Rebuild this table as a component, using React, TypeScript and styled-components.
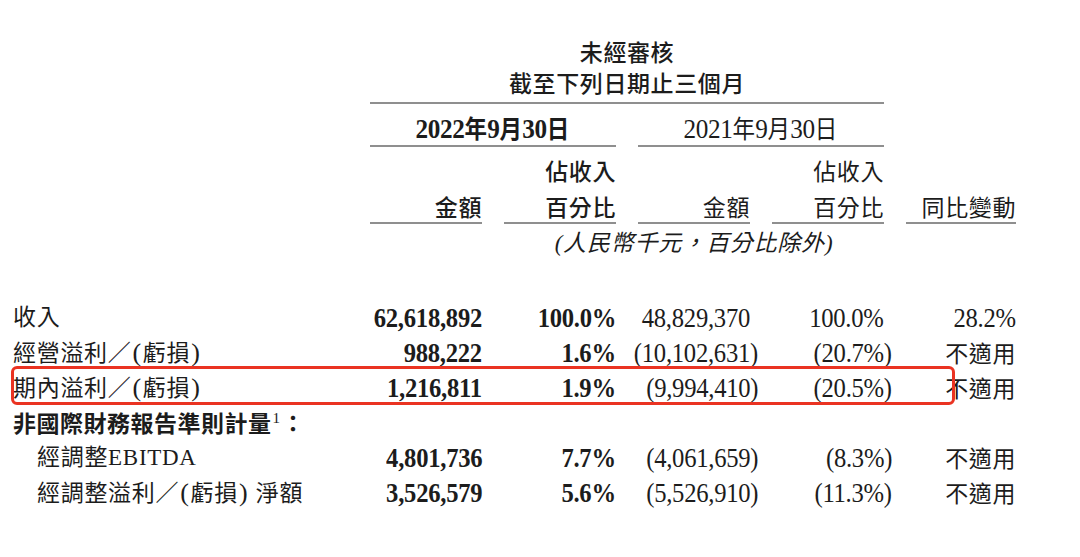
import React from "react";
import styled, { createGlobalStyle, css } from "styled-components";

const SANS = `"Noto Sans CJK TC", "Noto Sans CJK SC", sans-serif`;
const SERIF = `"Liberation Serif", "Noto Sans CJK TC", "Noto Sans CJK SC", serif`;
const INK = "#1c1c1c";
const RULE = "#8f8f8f";

const GlobalStyle = createGlobalStyle`
  html, body { margin: 0; padding: 0; background: #ffffff; }
  body { width: 1080px; height: 557px; overflow: hidden; color: ${INK}; }
`;

const Page = styled.main`
  box-sizing: border-box;
  width: 1080px;
  padding: 36px 0 0 13px;
`;

const Grid = styled.div`
  display: grid;
  grid-template-columns: 335px 112px 112px 112px 112px 110px;
  column-gap: 22px;
`;

/* condensed figures: the source typesets Times digits narrow and tall */
const Condensed = styled.span<{ $origin?: string; $scale?: number }>`
  display: inline-block;
  white-space: nowrap;
  transform: scaleX(${(p) => p.$scale ?? 0.88});
  transform-origin: ${(p) => p.$origin ?? "right"} center;
`;

/* ---------- header ---------- */

const Title = styled.div<{ $ruled?: boolean }>`
  grid-column: 2 / 6;
  text-align: center;
  font-family: ${SANS};
  font-size: 23px;
  font-weight: 500;
  letter-spacing: 0.6px;
  line-height: 31px;
  ${(p) =>
    p.$ruled &&
    css`
      padding-bottom: 4px;
      border-bottom: 2px solid ${RULE};
    `}
`;

const DateCell = styled.div<{ $span: string; $bold?: boolean }>`
  grid-column: ${(p) => p.$span};
  display: flex;
  justify-content: center;
  font-family: ${SERIF};
  font-size: 28px;
  letter-spacing: -0.4px;
  font-weight: ${(p) => (p.$bold ? 700 : 400)};
  line-height: 31px;
  padding: 8px 0 1px;
  border-bottom: 2px solid ${RULE};
`;

const Ideo = styled.span<{ $bold?: boolean }>`
  font-family: ${SANS};
  font-size: 25px;
  letter-spacing: 0.3px;
  font-weight: ${(p) => (p.$bold ? 700 : 400)};
`;

const HeadCell = styled.div<{ $col: number; $bold?: boolean }>`
  grid-column: ${(p) => p.$col};
  display: flex;
  flex-direction: column;
  justify-content: flex-end;
  align-items: flex-end;
  gap: 6px;
  padding: 8px 0 1px;
  border-bottom: 2px solid ${RULE};
  font-family: ${SANS};
  font-size: 23px;
  font-weight: ${(p) => (p.$bold ? 500 : 400)};
  letter-spacing: 0.6px;
  line-height: 30px;
`;

const HeadLine = styled.span`
  display: block;
  white-space: nowrap;
`;

const Note = styled.div`
  grid-column: 3 / 6;
  text-align: center;
  padding-top: 5px;
  font-family: ${SERIF};
  font-style: italic;
  font-size: 23px;
  letter-spacing: 0.8px;
  line-height: 30px;
`;

/* ---------- body ---------- */

const Body = styled.section`
  margin-top: 41px;
`;

const Row = styled(Grid)<{ $highlight?: boolean }>`
  position: relative;
  line-height: 35px;
  height: 35px;
  ${(p) =>
    p.$highlight &&
    css`
      &::after {
        content: "";
        position: absolute;
        left: -2px;
        top: -4px;
        bottom: 0;
        width: 944px;
        box-sizing: border-box;
        border: 3px solid #ea3322;
        border-radius: 6px;
        pointer-events: none;
      }
    `}
`;

const Label = styled.div<{ $indent?: boolean }>`
  padding-left: ${(p) => (p.$indent ? "24px" : "0")};
  font-family: ${SERIF};
  font-size: 23px;
  letter-spacing: 0.7px;
  white-space: nowrap;
`;

const Paren = styled.span`
  font-size: 26px;
  margin: 0 1px;
`;

const Section = styled.div`
  grid-column: 1 / -1;
  font-family: ${SANS};
  font-size: 23px;
  font-weight: 700;
  letter-spacing: 0.5px;
  white-space: nowrap;
`;

const Sup = styled.sup`
  font-family: "Liberation Serif", serif;
  font-weight: 400;
  font-size: 15px;
  line-height: 0;
  vertical-align: 9px;
  margin: 0 1px 0 1px;
`;

const Num = styled.div<{ $bold?: boolean }>`
  display: flex;
  justify-content: flex-end;
  font-family: ${SERIF};
  font-size: 28px;
  letter-spacing: -0.3px;
  font-weight: ${(p) => (p.$bold ? 700 : 400)};
  white-space: nowrap;
`;

const Hang = styled.span`
  margin-right: -9px;
`;

const NotApplicable = styled.div`
  text-align: right;
  font-family: ${SANS};
  font-size: 23px;
  letter-spacing: 0.6px;
  white-space: nowrap;
`;

type DataRow = {
  label: string;
  indent?: boolean;
  highlight?: boolean;
  a: string;
  ap: string;
  b: string;
  bp: string;
  ch: string;
};

const figure = (v: string) => (
  <Condensed>
    {v.endsWith(")") ? (
      <>
        {v.slice(0, -1)}
        <Hang>)</Hang>
      </>
    ) : (
      v
    )}
  </Condensed>
);

/* render half-width parentheses in labels a little larger, as in the source */
const labelText = (s: string) =>
  s.split(/([()])/).map((part, i) =>
    part === "(" || part === ")" ? <Paren key={i}>{part}</Paren> : part
  );

const top: DataRow[] = [
  { label: "收入", a: "62,618,892", ap: "100.0%", b: "48,829,370", bp: "100.0%", ch: "28.2%" },
  { label: "經營溢利／(虧損)", a: "988,222", ap: "1.6%", b: "(10,102,631)", bp: "(20.7%)", ch: "不適用" },
  { label: "期內溢利／(虧損)", a: "1,216,811", ap: "1.9%", b: "(9,994,410)", bp: "(20.5%)", ch: "不適用", highlight: true },
];

const nonIfrs: DataRow[] = [
  { label: "經調整EBITDA", indent: true, a: "4,801,736", ap: "7.7%", b: "(4,061,659)", bp: "(8.3%)", ch: "不適用" },
  { label: "經調整溢利／(虧損) 淨額", indent: true, a: "3,526,579", ap: "5.6%", b: "(5,526,910)", bp: "(11.3%)", ch: "不適用" },
];

function DataLine({ r }: { r: DataRow }) {
  return (
    <Row $highlight={r.highlight}>
      <Label $indent={r.indent}>{labelText(r.label)}</Label>
      <Num $bold>{figure(r.a)}</Num>
      <Num $bold>{figure(r.ap)}</Num>
      <Num>{figure(r.b)}</Num>
      <Num>{figure(r.bp)}</Num>
      {r.ch === "不適用" ? <NotApplicable>{r.ch}</NotApplicable> : <Num>{figure(r.ch)}</Num>}
    </Row>
  );
}

export default function App() {
  return (
    <>
      <GlobalStyle />
      <Page>
        <Grid>
          <Title>未經審核</Title>
          <Title $ruled>截至下列日期止三個月</Title>
          <DateCell $span="2 / 4" $bold>
            <Condensed $origin="center" $scale={0.9}>
              2022<Ideo $bold>年</Ideo>9<Ideo $bold>月</Ideo>30<Ideo $bold>日</Ideo>
            </Condensed>
          </DateCell>
          <DateCell $span="4 / 6">
            <Condensed $origin="center" $scale={0.9}>
              2021<Ideo>年</Ideo>9<Ideo>月</Ideo>30<Ideo>日</Ideo>
            </Condensed>
          </DateCell>
          <HeadCell $col={2} $bold>
            <HeadLine>金額</HeadLine>
          </HeadCell>
          <HeadCell $col={3} $bold>
            <HeadLine>佔收入</HeadLine>
            <HeadLine>百分比</HeadLine>
          </HeadCell>
          <HeadCell $col={4}>
            <HeadLine>金額</HeadLine>
          </HeadCell>
          <HeadCell $col={5}>
            <HeadLine>佔收入</HeadLine>
            <HeadLine>百分比</HeadLine>
          </HeadCell>
          <HeadCell $col={6}>
            <HeadLine>同比變動</HeadLine>
          </HeadCell>
          <Note>(人民幣千元，百分比除外)</Note>
        </Grid>
        <Body>
          {top.map((r) => (
            <DataLine key={r.label} r={r} />
          ))}
          <Row>
            <Section>
              非國際財務報告準則計量<Sup>1</Sup>：
            </Section>
          </Row>
          {nonIfrs.map((r) => (
            <DataLine key={r.label} r={r} />
          ))}
        </Body>
      </Page>
    </>
  );
}
